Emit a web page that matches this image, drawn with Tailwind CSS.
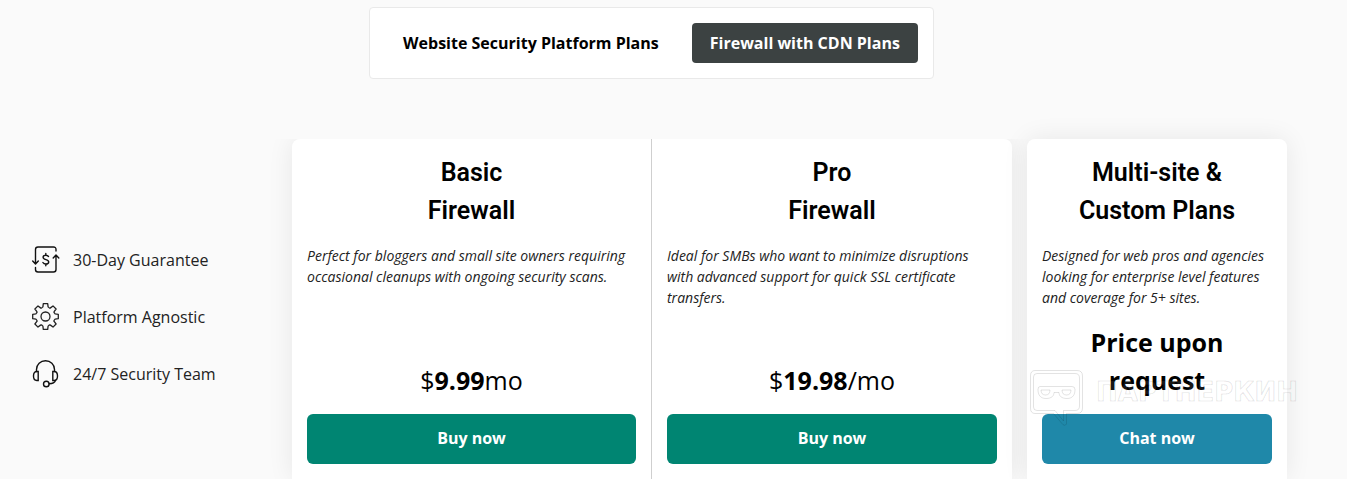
<!DOCTYPE html>
<html lang="en">
<head>
<meta charset="utf-8">
<title>Firewall with CDN Plans</title>
<script src="https://cdn.jsdelivr.net/npm/@tailwindcss/browser@4"></script>
</head>
<body class="flex min-h-screen flex-col overflow-x-hidden bg-[#fafafa] font-['Open_Sans','Noto_Sans',sans-serif] text-base text-black">
<nav aria-label="Plan type" class="flex justify-center pt-[7px] pr-11">
  <div class="flex gap-[15px] rounded border border-[#e9e9e9] bg-white p-[15px]">
    <button type="button" class="h-10 rounded px-[18px] font-bold">Website Security Platform Plans</button>
    <button type="button" class="h-10 rounded bg-[#3c4242] px-[18px] font-bold text-white">Firewall with CDN Plans</button>
  </div>
</nav>
<main class="mt-[60px] flex flex-1 pr-[60px] pl-8">
  <ul class="flex w-[260px] shrink-0 flex-col gap-[29px] pt-[107px] text-[#222]">
    <li class="flex h-7 items-center gap-[13px]">
      <svg class="size-7 shrink-0" viewBox="0 0 28 28" fill="none" stroke="#111" stroke-width="1.4" stroke-linecap="round" stroke-linejoin="round" aria-hidden="true"><path d="M24 5V3.500Q24 1 21.500 1H6Q3.500 1 3.500 3.500V17.500M.700 15 3.500 18l2.800-3M3.500 21.500v2Q3.500 26 6 26h15.500q2.500 0 2.500-2.500V9.500M21.200 12 24 9l2.800 3"/><path d="M16.500 10.500c-.700-1.100-1.700-1.300-2.700-1.300-1.600 0-2.700.8-2.700 2.100 0 3.100 5.600 1.500 5.600 4.600 0 1.300-1.200 2.100-2.900 2.100-1.200 0-2.300-.500-2.900-1.500M13.800 7.500v1.700M13.800 18v1.800"/></svg>
      30-Day Guarantee</li>
    <li class="flex h-7 items-center gap-[13px]">
      <svg class="size-7 shrink-0" viewBox="-13.500 -13.500 28 28" fill="none" stroke="#222" stroke-width="1.300" stroke-linejoin="round" aria-hidden="true"><circle r="4.500"/><path d="M-2.200-12.800H2.200L2.600-9.600Q4.500-7.800 4.950-8.630L7.500-10.600 10.600-7.500 8.630-4.950Q7.800-4.500 9.600-2.600L12.800-2.200V2.200L9.600 2.600Q7.800 4.500 8.630 4.950L10.600 7.500 7.500 10.600 4.950 8.630Q4.500 7.800 2.600 9.600L2.200 12.800H-2.200L-2.600 9.600Q-4.500 7.800-4.950 8.630L-7.500 10.600-10.600 7.500-8.630 4.950Q-7.800 4.500-9.600 2.600L-12.800 2.200V-2.200L-9.600-2.600Q-7.800-4.500-8.630-4.950L-10.600-7.500-7.500-10.600-4.950-8.630Q-4.500-7.800-2.600-9.600Z"/></svg>
      Platform Agnostic</li>
    <li class="flex h-7 items-center gap-[13px]">
      <svg class="size-7 shrink-0" viewBox="0 0 28 28" fill="none" stroke="#111" stroke-width="1.400" stroke-linecap="round" aria-hidden="true"><path d="M4.500 11.500V9.500C4.500 4.300 8.500.800 13.500.800s9 3.500 9 8.700v2M23.500 20.500c-.8 2.300-3 3.200-6.300 3.300"/><path d="M6.200 11.500H4.800C2.700 11.500 1.500 13 1.500 16s1.200 4.500 3.300 4.500h1.400zM20.800 11.500h1.400c2.100 0 3.300 1.500 3.300 4.500s-1.200 4.500-3.300 4.500h-1.400z"/><circle cx="14.300" cy="24" r="2.800"/></svg>
      24/7 Security Team</li>
  </ul>
  <div class="grid flex-1 grid-cols-2 rounded-t-lg bg-white shadow-[0_0_26px_rgba(0,0,0,0.08)] [clip-path:inset(0_-40px_0_-40px)]">
    <section class="flex flex-col border-r border-[#cfcfcf] px-[15px] pt-[15px]">
      <h2 class="text-center font-[Roboto,sans-serif] text-[25px] leading-[38px] font-semibold">Basic<br>Firewall</h2>
      <p class="mt-[15px] h-[63px] text-sm leading-[21px] text-[#222] italic">Perfect for bloggers and small site owners requiring occasional cleanups with ongoing security scans.</p>
      <p class="mt-[15px] flex h-[76px] items-end justify-center text-[25px] leading-[38px]"><span>$<strong class="font-bold">9.99</strong>mo</span></p>
      <button type="button" class="mt-[15px] h-[50px] rounded-md bg-[#008572] pb-0.5 font-bold text-white">Buy now</button>
    </section>
    <section class="flex flex-col px-[15px] pt-[15px]">
      <h2 class="text-center font-[Roboto,sans-serif] text-[25px] leading-[38px] font-semibold">Pro<br>Firewall</h2>
      <p class="mt-[15px] h-[63px] text-sm leading-[21px] text-[#222] italic">Ideal for SMBs who want to minimize disruptions with advanced support for quick SSL certificate transfers.</p>
      <p class="mt-[15px] flex h-[76px] items-end justify-center text-[25px] leading-[38px]"><span>$<strong class="font-bold">19.98</strong>/mo</span></p>
      <button type="button" class="mt-[15px] h-[50px] rounded-md bg-[#008572] pb-0.5 font-bold text-white">Buy now</button>
    </section>
  </div>
  <section class="relative ml-[15px] flex w-[260px] shrink-0 flex-col rounded-t-lg bg-white px-[15px] pt-[15px] shadow-[0_0_26px_rgba(0,0,0,0.08)]">
    <h2 class="text-center font-[Roboto,sans-serif] text-[25px] leading-[38px] font-semibold">Multi-site &amp;<br>Custom Plans</h2>
    <p class="mt-[15px] h-[63px] text-sm leading-[21px] text-[#222] italic">Designed for web pros and agencies looking for enterprise level features and coverage for 5+ sites.</p>
    <p class="mt-[15px] text-center text-[25px] leading-[38px] font-bold">Price upon<br>request</p>
    <button type="button" class="mt-[15px] h-[50px] rounded-md bg-[#1f88a9] pb-0.5 font-bold text-white">Chat now</button>
    <svg class="pointer-events-none absolute top-[228px] left-0 h-[64px] w-[272px]" viewBox="0 0 272 64" fill="none" stroke="#000" stroke-opacity=".11" stroke-linejoin="round" aria-hidden="true">
      <path d="M8 3.500h42q5.500 0 5.500 5.500v32q0 5.500-5.500 5.500H39.500V57q-2 3-5-1L26.500 46.500H8Q3.500 46.500 3.500 41V9Q3.500 3.500 8 3.500z"/>
      <path d="M10 6.500h38q4.500 0 4.500 4.500v28q0 4.500-4.500 4.500h-11.500V54L28 43.500H10Q6.500 43.500 6.500 40V10Q6.500 6.500 10 6.500z"/>
      <path d="M13 19.500h32q3 0 3 3c0 5-2 9-8 9s-8-3-8-6h-5c0 3-2 6-8 6s-8-4-8-9q0-3 2-3zM14 23h9q0 5-4.500 5T14 23zM35 23h9q0 5-4.500 5T35 23z"/>
      <text x="69" y="34" fill="#fff" fill-opacity=".1" font-family="DejaVu Sans, sans-serif" font-size="26" font-weight="700">ПАРТНЕРКИН</text>
    </svg>
  </section>
</main>
</body>
</html>
